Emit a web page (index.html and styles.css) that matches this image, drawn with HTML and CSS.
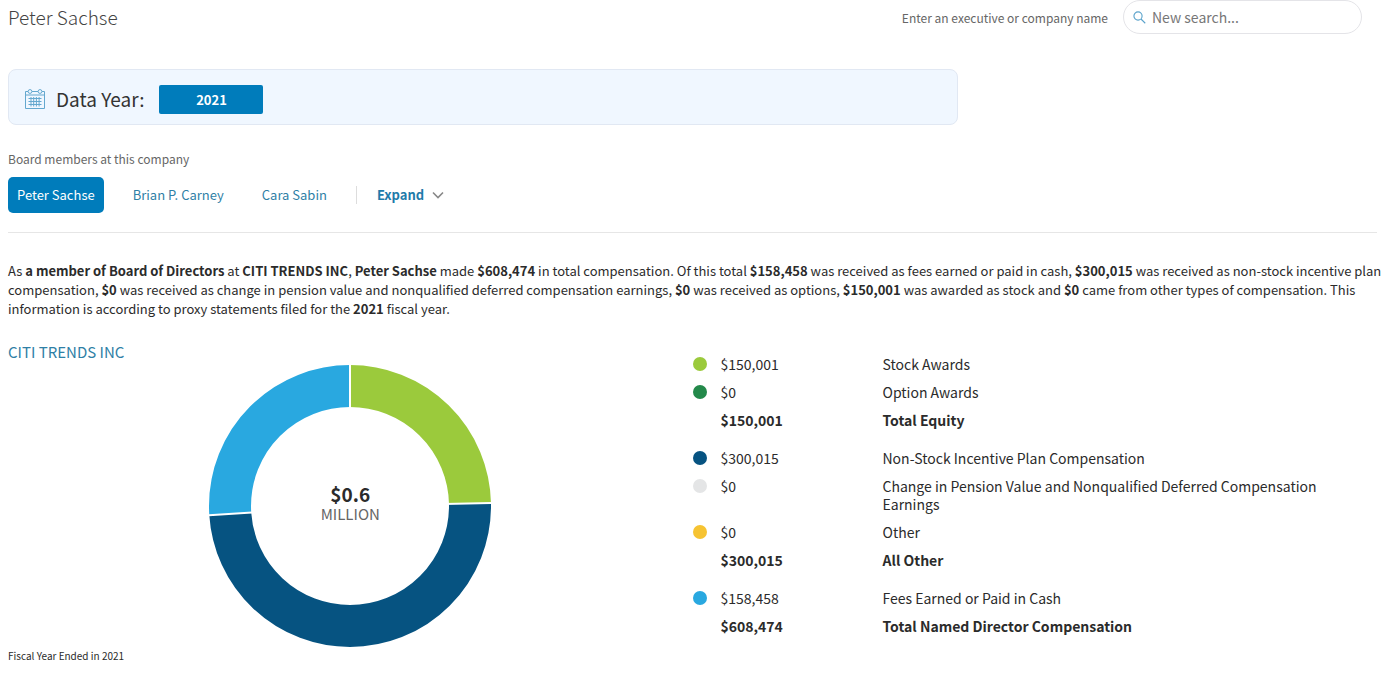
FILE: index.html
```html
<!DOCTYPE html>
<html lang="en">
<head>
<meta charset="utf-8">
<meta name="viewport" content="width=device-width, initial-scale=1">
<title>Peter Sachse - Executive Compensation</title>
<link rel="stylesheet" href="styles.css">
</head>
<body>
<main class="page">
  <header class="top">
    <h1 class="name">Peter Sachse</h1>
    <form class="search">
      <label class="search-label" for="q">Enter an executive or company name</label>
      <div class="search-box">
        <svg class="search-icon" viewBox="0 0 14 14" aria-hidden="true"><circle cx="5.4" cy="5.4" r="4.4"/><path d="M8.6 8.6 13.2 13.2"/></svg>
        <input class="search-input" id="q" type="text" placeholder="New search...">
      </div>
    </form>
  </header>

  <section class="year-panel">
    <svg class="calendar" viewBox="0 0 20 20" aria-hidden="true">
      <path d="M3 2.500H.5V19.500H19.500V2.500H17M7 2.500H13M.5 6H19.500"/>
      <circle cx="5" cy="2.500" r="1.900"/><circle cx="15" cy="2.500" r="1.900"/>
      <path d="M3.500 9.500H16.500M3.500 12.500H16.500M3.500 15.500H16.500M6 8V17.500M8.700 8V17.500M11.400 8V17.500M14.100 8V17.500"/>
    </svg>
    <h2 class="year-title">Data Year:</h2>
    <button class="year-button" type="button">2021</button>
  </section>

  <p class="board-label">Board members at this company</p>
  <nav class="members">
    <a class="member member-active" href="#">Peter Sachse</a>
    <a class="member" href="#">Brian P. Carney</a>
    <a class="member" href="#">Cara Sabin</a>
    <button class="expand" type="button">Expand
      <svg class="chevron" viewBox="0 0 12 8" aria-hidden="true"><path d="M1 1.500 6 6.500 11 1.500"/></svg>
    </button>
  </nav>

  <p class="summary">As <b>a member of Board of Directors</b> at <b>CITI TRENDS INC</b>, <b>Peter Sachse</b> made <b>$608,474</b> in total compensation. Of this total <b>$158,458</b> was received as fees earned or paid in cash, <b>$300,015</b> was received as non-stock incentive plan compensation, <b>$0</b> was received as change in pension value and nonqualified deferred compensation earnings, <b>$0</b> was received as options, <b>$150,001</b> was awarded as stock and <b>$0</b> came from other types of compensation. This information is according to proxy statements filed for the <b>2021</b> fiscal year.</p>

  <section class="details">
    <div class="chart-column">
      <a class="company" href="#">CITI TRENDS INC</a>
      <div class="donut">
        <svg class="donut-chart" viewBox="0 0 282 282" role="img" aria-label="Compensation breakdown">
          <g class="ring" transform="rotate(-90 141 141)">
            <circle class="stock" cx="141" cy="141" r="120" pathLength="1000" stroke-dasharray="246.5 1000"/>
            <circle class="incentive" cx="141" cy="141" r="120" pathLength="1000" stroke-dasharray="493.1 1000" stroke-dashoffset="-246.5"/>
            <circle class="fees" cx="141" cy="141" r="120" pathLength="1000" stroke-dasharray="260.4 1000" stroke-dashoffset="-739.6"/>
          </g>
          <path class="separators" d="M141 141V0M141 141 282 138M141 141 0 150.200"/>
        </svg>
        <div class="donut-text"><strong class="donut-value">$0.6</strong><span class="donut-unit">MILLION</span></div>
      </div>
      <small class="fiscal">Fiscal Year Ended in 2021</small>
    </div>
    <table class="legend">
      <tbody>
        <tr><td class="key"><i class="dot dot-stock"></i></td><td class="amount">$150,001</td><td>Stock Awards</td></tr>
        <tr><td class="key"><i class="dot dot-option"></i></td><td>$0</td><td>Option Awards</td></tr>
        <tr class="total"><td></td><td>$150,001</td><td>Total Equity</td></tr>
      </tbody>
      <tbody>
        <tr><td class="key"><i class="dot dot-incentive"></i></td><td>$300,015</td><td>Non-Stock Incentive Plan Compensation</td></tr>
        <tr><td class="key"><i class="dot dot-pension"></i></td><td>$0</td><td>Change in Pension Value and Nonqualified Deferred Compensation Earnings</td></tr>
        <tr><td class="key"><i class="dot dot-other"></i></td><td>$0</td><td>Other</td></tr>
        <tr class="total"><td></td><td>$300,015</td><td>All Other</td></tr>
      </tbody>
      <tbody>
        <tr><td class="key"><i class="dot dot-fees"></i></td><td>$158,458</td><td>Fees Earned or Paid in Cash</td></tr>
        <tr class="total"><td></td><td>$608,474</td><td>Total Named Director Compensation</td></tr>
      </tbody>
    </table>
  </section>
</main>
</body>
</html>
```
FILE: styles.css
```css
* { box-sizing: border-box; }

body {
  margin: 0;
  background: #fff;
  color: #2b2b2b;
  font: 13px/19px "Noto Sans CJK SC", "Open Sans", sans-serif;
}

h1, h2, p { margin: 0; font-weight: 400; }
a { color: #2f7fa6; text-decoration: none; }
button, input { font: inherit; }

.page { padding: 0 11px 12px 8px; }

.top { display: flex; justify-content: space-between; align-items: center; padding-right: 15px; }
.name { font-size: 19px; font-weight: 300; line-height: 34px; color: #444; }
.search { display: flex; align-items: center; gap: 15px; }
.search-label { font-size: 12px; color: #666; }
.search-box {
  display: flex;
  align-items: center;
  gap: 6px;
  width: 239px;
  height: 34px;
  padding: 0 9px;
  border: 1px solid #e4e4e8;
  border-radius: 17px;
}
.search-icon { width: 13px; height: 13px; fill: none; stroke: #5ba3cb; stroke-width: 1.2; }
.search-input { flex: 1; min-width: 0; padding: 0; border: 0; outline: 0; background: none; font-size: 14px; color: #666; }
.search-input::placeholder { color: #777; opacity: 1; }

.year-panel {
  display: flex;
  align-items: center;
  width: 69.4%;
  height: 56px;
  margin-top: 35px;
  padding: 4px 16px 0;
  border: 1px solid #e1e8f3;
  border-radius: 8px;
  background: #f0f7ff;
}
.calendar { width: 20px; height: 20px; fill: none; stroke: #64a8cf; stroke-width: 1; }
.year-title { margin: 0 15px 0 11px; font-size: 19px; line-height: 24px; color: #333; }
.year-button {
  width: 104px;
  height: 29px;
  padding: 0;
  border: 0;
  border-radius: 2px;
  background: #007cbb;
  color: #fff;
  font-size: 13px;
  font-weight: 700;
}

.board-label { margin-top: 24px; font-size: 12px; color: #666; }
.members {
  display: flex;
  align-items: center;
  gap: 20px;
  margin-top: 9px;
  padding-bottom: 19px;
  border-bottom: 1px solid #e6e6e6;
}
.member { padding: 0 9px; line-height: 36px; }
.member-active { border-radius: 5px; background: #007cbb; color: #fff; }
.expand {
  display: flex;
  align-items: center;
  gap: 8px;
  padding: 0 0 0 20px;
  border: 0;
  border-left: 1px solid #ddd;
  background: none;
  color: #1f7baa;
  font-weight: 700;
  line-height: 18px;
}
.chevron { width: 12px; height: 8px; fill: none; stroke: #888; stroke-width: 1.6; }

.summary { margin: 28px -8px 0 0; }

.details { display: grid; grid-template-columns: 1fr 1fr; margin-top: 24px; }
.chart-column { display: grid; }
.company { justify-self: start; font-size: 15px; line-height: 20px; }
.donut { display: grid; place-items: center; margin-top: 3px; }
.donut > * { grid-area: 1 / 1; }
.donut-chart { width: 282px; height: 282px; }
.ring { fill: none; stroke-width: 42; }
.stock { stroke: #9bca3c; }
.incentive { stroke: #065381; }
.fees { stroke: #29a8e0; }
.separators { fill: none; stroke: #fff; stroke-width: 2; }
.donut-text { display: flex; flex-direction: column; align-items: center; padding-bottom: 4px; line-height: 20px; }
.donut-value { font-size: 19px; }
.donut-unit { font-size: 15px; color: #666; }
.fiscal { font-size: 10px; line-height: 18px; }

.legend { align-self: start; margin-top: 8px; border-collapse: collapse; font-size: 14px; line-height: 18px; }
.legend td { padding: 5px 0; vertical-align: top; }
.legend td:last-child { padding-right: 30px; }
.legend tbody + tbody tr:first-child td { padding-top: 15px; }
.key { width: 28px; }
.amount { width: 162px; }
.total { font-weight: 700; }
.dot { display: block; width: 14px; height: 14px; margin-top: 2px; border-radius: 50%; }
.dot-stock { background: #9bca3c; }
.dot-option { background: #23894a; }
.dot-incentive { background: #065381; }
.dot-pension { background: #e4e5e6; }
.dot-other { background: #f6c332; }
.dot-fees { background: #29a8e0; }
```
